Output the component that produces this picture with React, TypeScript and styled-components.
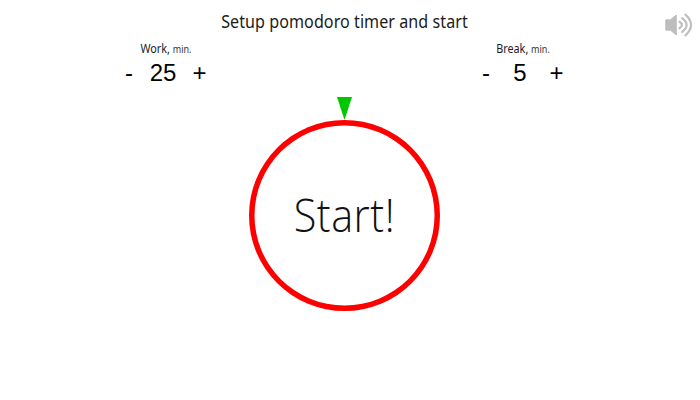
import React, { useState } from "react";
import styled, { createGlobalStyle } from "styled-components";

const GlobalStyle = createGlobalStyle`
  * { box-sizing: border-box; }
  body { margin: 0; background: #fff; color: #1b1b1b; font-family: "Noto Sans", "Open Sans", sans-serif; overflow: hidden; }
  button { border: 0; padding: 0; background: none; color: inherit; cursor: pointer; }
`;

const Page = styled.main`
  width: 700px;
  height: 400px;
  display: flex;
  flex-direction: column;
`;

const Header = styled.header`
  height: 42px;
  display: grid;
  grid-template-columns: 35px 619px 46px;
`;

const Title = styled.h1`
  margin: 9px 0 0;
  font-size: 17.3px;
  line-height: 26px;
  font-weight: 400;
  letter-spacing: 0.05px;
  text-align: center;
  white-space: nowrap;
  transform: scaleX(0.932);
`;

const SoundButton = styled.button`
  margin: 10px 0 0 10px;
  width: 30px;
  height: 30px;
  svg { display: block; }
`;

const Settings = styled.section`
  width: 689px;
  height: 54px;
  display: flex;
  justify-content: center;
  gap: 275px;
`;

const Setting = styled.div`
  width: 82px;
  display: flex;
  flex-direction: column;
`;

const Label = styled.div`
  height: 18px;
  font-size: 12px;
  line-height: 14px;
  text-align: center;
  white-space: nowrap;
  transform: scaleX(0.9);
`;

const Unit = styled.span`
  font-size: 10px;
  color: #333;
`;

const Stepper = styled.div`
  height: 26px;
  margin-left: -1px;
  display: grid;
  grid-template-columns: 10px 1fr 15px;
  align-items: center;
  font: 24px/26px "Liberation Sans", Arial, sans-serif;
  text-align: center;
`;

const StepButton = styled.button`
  font: 24px/26px "Liberation Sans", Arial, sans-serif;
  color: #000;
`;

const Value = styled.output`
  color: #000;
`;

const Timer = styled.section`
  width: 689px;
  display: flex;
  flex-direction: column;
  align-items: center;
`;

const Pointer = styled.svg`
  display: block;
  margin-top: 1px;
`;

const Dial = styled.button`
  width: 191px;
  height: 191px;
  box-shadow: inset 0 0 0 5.5px #f00;
  border-radius: 50%;
  display: flex;
  align-items: center;
  justify-content: center;
`;

const StartText = styled.span`
  margin-bottom: 3px;
  font: 300 46px/60px "Open Sans", "Noto Sans", sans-serif;
  letter-spacing: 0.6px;
  color: #111;
  transform: scaleX(0.9);
`;

function Counter({ name, initial }: { name: string; initial: number }) {
  const [value, setValue] = useState(initial);
  return (
    <Setting>
      <Label>{name}, <Unit>min.</Unit></Label>
      <Stepper>
        <StepButton onClick={() => setValue(Math.max(1, value - 1))}>-</StepButton>
        <Value>{value}</Value>
        <StepButton onClick={() => setValue(value + 1)}>+</StepButton>
      </Stepper>
    </Setting>
  );
}

export default function App() {
  return (
    <>
      <GlobalStyle />
      <Page>
        <Header>
          <span />
          <Title>Setup pomodoro timer and start</Title>
          <SoundButton>
            <svg width="30" height="30" viewBox="0 0 30 30" fill="none">
              <path d="M1.8 9.8H6.5L12.3 5V25L6.5 20.2H1.8Z" fill="#bdbdbd" stroke="#bdbdbd" strokeLinejoin="round" />
              <path d="M15.5 11.8Q20.5 15 15.5 18.2M18.2 8.2Q27 15 18.2 21.8M21.5 4.7Q32.5 15 21.5 25.3" stroke="#c0c0c0" strokeWidth="2.3" strokeLinecap="round" />
            </svg>
          </SoundButton>
        </Header>
        <Settings>
          <Counter name="Work" initial={25} />
          <Counter name="Break" initial={5} />
        </Settings>
        <Timer>
          <Pointer width="15" height="23" viewBox="0 0 15 23">
            <path d="M0 0H15L7.5 23Z" fill="#00c800" />
          </Pointer>
          <Dial>
            <StartText>Start!</StartText>
          </Dial>
        </Timer>
      </Page>
    </>
  );
}
